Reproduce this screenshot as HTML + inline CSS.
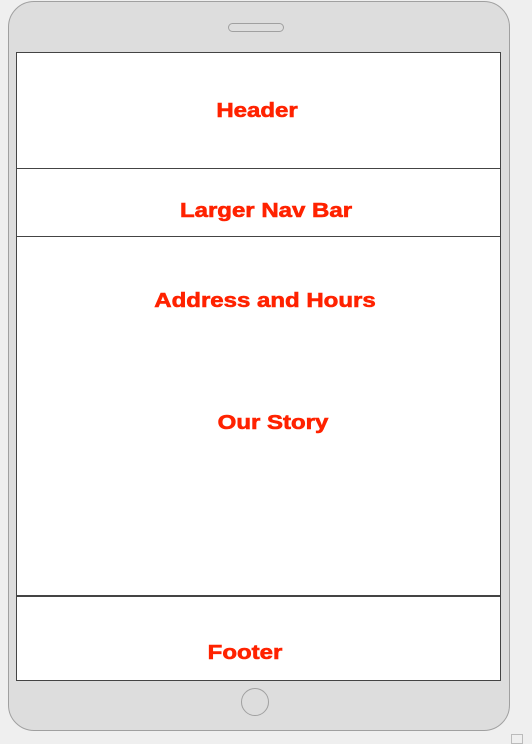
<!DOCTYPE html>
<html><head><style>
body{margin:0;width:532px;height:740px;background:#efefef;position:relative;overflow:hidden;font-family:"Liberation Sans",Arial,sans-serif}
.dev{position:absolute;left:8px;top:1px;width:500px;height:728px;background:#dddddd;border:1px solid #a0a0a0;border-radius:26px}
.pill{position:absolute;left:228px;top:23px;width:54px;height:7px;border:1px solid #a0a0a0;border-radius:5px;background:#dedede}
.home{position:absolute;left:241px;top:688px;width:26px;height:26px;border:1px solid #a0a0a0;border-radius:50%}
.scr{position:absolute;left:16px;top:52px;width:483px;height:627px;background:#fff;border:1px solid #444}
.line{position:absolute;left:16px;width:485px;height:1px;background:#444}
.t{position:absolute;color:#ff2200;font-weight:bold;font-size:20px;transform:translateX(-50%) scaleX(1.2);white-space:nowrap;line-height:20px;-webkit-text-stroke:0.6px #ff2200}
.rs{position:absolute;left:511px;top:734px;width:10px;height:8px;border:1px solid #bbb}
</style></head><body>
<div class="dev"></div>
<div class="pill"></div>
<div class="home"></div>
<div class="scr"></div>
<div class="line" style="top:168px"></div>
<div class="line" style="top:236px"></div>
<div class="line" style="top:595px;height:2px"></div>
<div class="t" style="left:257px;top:101px">Header</div>
<div class="t" style="left:266px;top:201px">Larger Nav Bar</div>
<div class="t" style="left:265px;top:291px">Address and Hours</div>
<div class="t" style="left:273px;top:413px">Our Story</div>
<div class="t" style="left:245px;top:643px">Footer</div>
<div class="rs"></div>
</body></html>
